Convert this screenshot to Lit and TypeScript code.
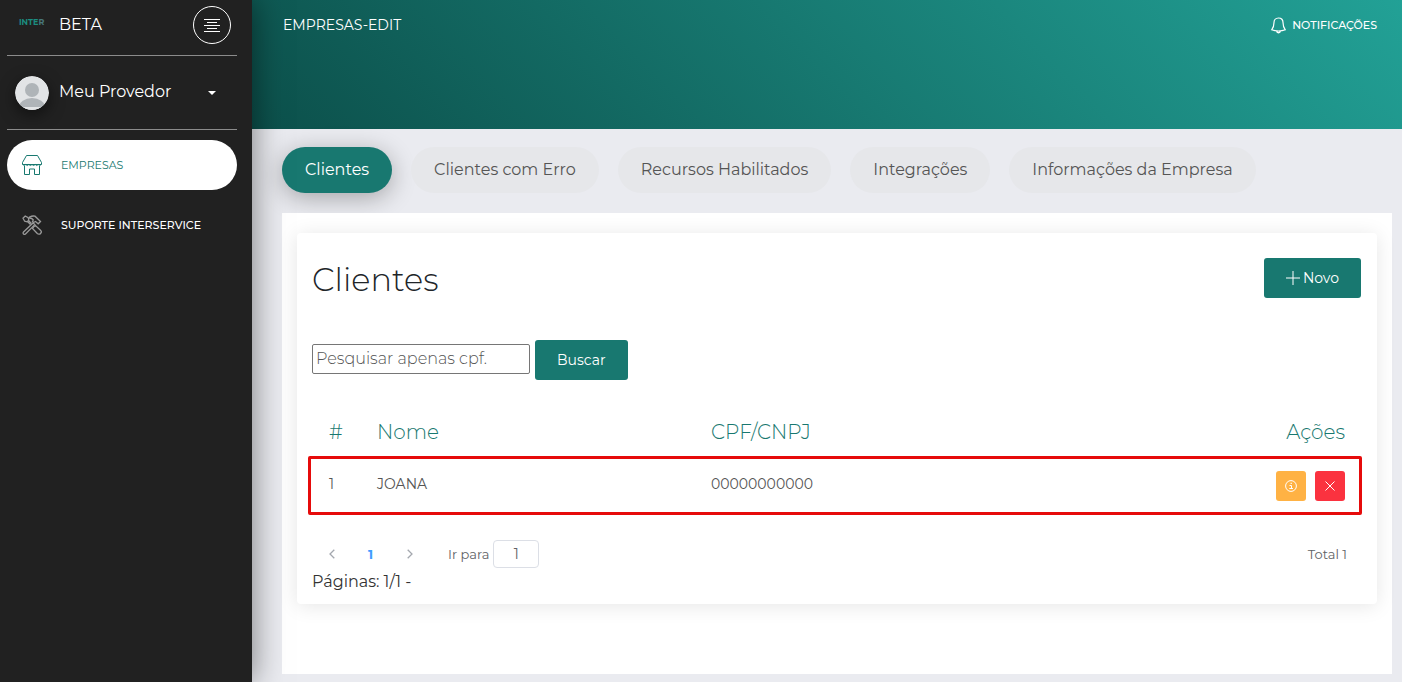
import { LitElement, html, css, svg } from "lit";
import { customElement, property, state } from "lit/decorators.js";
import { classMap } from "lit/directives/class-map.js";

interface Cliente {
  id: number;
  nome: string;
  documento: string;
}

const baseStyles = css`
  *,
  *::before,
  *::after {
    box-sizing: border-box;
  }
  button,
  input {
    font-family: inherit;
    margin: 0;
  }
  button {
    cursor: pointer;
    border: 0;
    padding: 0;
    background: none;
    color: inherit;
  }
  a {
    color: inherit;
    text-decoration: none;
  }
  svg {
    display: block;
    fill: none;
    stroke: currentColor;
    flex: none;
  }
`;

const shopIcon = svg`
  <path d="M4.500.5h11l4 7v2h-19v-2z"/>
  <path d="M.8 9.500q1.500 2 3 0q1.500 2 3 0q1.600 2 3.200 0q1.600 2 3.200 0q1.500 2 3 0q1.500 2 3 0"/>
  <path d="M2.500 11v8.500h5v-5.500h5v5.500h5v-8.500"/>`;

const toolsIcon = svg`
  <path d="M1 3.200l2.200-2.200l3 1.700l.6 2.400l-1.700 1.700l-2.400-.6z"/>
  <path d="M6.500 5.500l3 3M5.500 6.500l3 3"/>
  <path d="M7.500 2q3-1.500 5.500-.8l5.500 5.300l-2.300 2.300l-2.700-2.300l-2 1l-1-1l.8-1.600q-1.500-2-3.800-1.900z"/>
  <path d="M11 8l-9.500 9a1.300 1.300 0 0 0 2 2l9.300-9.400z"/>
  <path d="M10.500 13.500l1.200-1.700l1.800-1.300l5 4.700a2.200 2.200 0 0 1-3.200 3.300z"/>`;

@customElement("app-sidebar")
export class AppSidebar extends LitElement {
  static styles = [
    baseStyles,
    css`
      :host {
        display: block;
        width: 252px;
        flex: none;
        background: #212121;
        color: #fff;
        padding: 0 15px 0 7px;
        box-shadow: 0 0 30px 0 rgba(0, 0, 0, 0.5);
        z-index: 1;
      }
      .brand,
      .user {
        display: flex;
        align-items: center;
        border-bottom: 1px solid #8c8c8c;
      }
      .brand {
        height: 56px;
        padding: 0 6px 6px 12px;
      }
      .logo {
        width: 27px;
        font-size: 8px;
        line-height: 8px;
        font-weight: 700;
        color: #1b8d80;
        padding-bottom: 6px;
      }
      .logo-end {
        color: #48767a;
      }
      .name {
        flex: 1;
        padding-left: 13px;
        font-size: 16px;
        line-height: 24px;
      }
      .toggle {
        width: 38px;
        height: 38px;
        border: 1px solid #fff;
        border-radius: 50%;
        display: grid;
        place-items: center;
      }
      .user {
        width: 100%;
        height: 74px;
        padding: 0 21px 0 8px;
        font-size: 16px;
        line-height: 24px;
        text-align: left;
      }
      .avatar {
        border-radius: 50%;
        box-shadow: 0 5px 15px rgba(0, 0, 0, 0.5);
      }
      .user-name {
        flex: 1;
        padding: 0 0 1px 10px;
      }
      .caret {
        border: 4px solid transparent;
        border-top-color: #fff;
        border-bottom: 0;
      }
      .menu {
        display: flex;
        flex-direction: column;
        gap: 10px;
        padding-top: 10px;
      }
      .item {
        display: flex;
        align-items: center;
        gap: 19px;
        height: 50px;
        padding-left: 15px;
        border-radius: 25px;
        font-size: 11px;
        font-weight: 500;
      }
      .item svg {
        color: #9a9a9a;
      }
      .active,
      .active svg {
        color: #187970;
      }
      .active {
        background: #fff;
        font-weight: 400;
      }
    `,
  ];

  render() {
    return html`
      <div class="brand">
        <span class="logo">INTE<span class="logo-end">R</span></span>
        <span class="name">BETA</span>
        <button class="toggle" aria-label="Alternar menu">
          <svg width="16" height="14" viewBox="0 0 16 14">
            <path d="M0 1.500h16M3 4.500h10M0 7.500h16M3 10.500h10M0 13.500h16" />
          </svg>
        </button>
      </div>
      <button class="user">
        <svg class="avatar" width="34" height="34" viewBox="0 0 34 34" stroke="none">
          <defs><clipPath id="round"><circle cx="17" cy="17" r="17" /></clipPath></defs>
          <g clip-path="url(#round)" stroke="none">
            <rect width="34" height="34" fill="#e2e4e6" />
            <circle cx="17" cy="14" r="7" fill="#afb4b8" />
            <ellipse cx="17" cy="31" rx="13" ry="9" fill="#afb4b8" />
            <rect y="31" width="34" height="3" fill="#e2e4e6" />
          </g>
        </svg>
        <span class="user-name">Meu Provedor</span>
        <span class="caret"></span>
      </button>
      <nav class="menu">
        <a class="item active" href="#empresas">
          <svg width="20" height="20" viewBox="0 0 20 20">${shopIcon}</svg>
          EMPRESAS
        </a>
        <a class="item" href="#suporte">
          <svg width="20" height="20" viewBox="0 0 20 20" stroke-width="1.300">${toolsIcon}</svg>
          SUPORTE INTERSERVICE
        </a>
      </nav>
    `;
  }
}

@customElement("app-tabs")
export class AppTabs extends LitElement {
  @property({ type: Array }) tabs: string[] = [];
  @state() private selected = 0;

  static styles = [
    baseStyles,
    css`
      :host {
        display: flex;
        flex-wrap: wrap;
        gap: 19px;
      }
      .tab {
        height: 46px;
        padding: 0 23px 2px;
        border-radius: 23px;
        background: #e6e7ea;
        color: #555;
        font-size: 16px;
        font-weight: 400;
      }
      .selected {
        background: #187870;
        color: #fff;
        box-shadow: 0 5px 25px rgba(0, 0, 0, 0.3);
      }
    `,
  ];

  render() {
    return this.tabs.map(
      (label, i) => html`
        <button
          class=${classMap({ tab: true, selected: i === this.selected })}
          @click=${() => (this.selected = i)}
        >${label}</button>
      `,
    );
  }
}

@customElement("app-clientes")
export class AppClientes extends LitElement {
  @property({ type: Array }) clientes: Cliente[] = [];

  static styles = [
    baseStyles,
    css`
      :host {
        display: block;
        background: #fff;
        border-radius: 4px;
        padding: 25px 15px 10px;
        box-shadow: 0 2px 20px rgba(0, 0, 0, 0.1);
      }
      .top {
        display: flex;
        justify-content: space-between;
        align-items: flex-start;
        padding-right: 1px;
      }
      .title {
        margin: 0;
        padding-top: 2px;
        font-size: 32px;
        line-height: 40px;
        font-weight: 300;
        color: #212529;
      }
      .primary {
        display: flex;
        align-items: center;
        justify-content: center;
        gap: 3px;
        height: 40px;
        padding: 0 22px;
        border-radius: 3px;
        background: #187870;
        color: #fff;
        font-size: 14px;
      }
      .search {
        display: flex;
        align-items: center;
        gap: 5px;
        margin: 40px 0 32px;
      }
      .query {
        width: 218px;
        height: 30px;
        margin-bottom: 2px;
        padding: 0 3px 2px;
        border: 1px solid #767676;
        border-radius: 2px;
        font-size: 16px;
        font-weight: 300;
      }
      .query::placeholder {
        color: #555;
      }
      .table {
        width: 100%;
        border-collapse: collapse;
        text-align: left;
      }
      th {
        height: 44px;
        padding: 0 17px 5px;
        font-size: 20px;
        font-weight: 300;
        color: #187870;
      }
      td {
        height: 59px;
        padding: 0 17px 3px;
        font-size: 14px;
        font-weight: 400;
        color: #555;
      }
      .num {
        width: 48px;
      }
      .nome {
        width: 334px;
      }
      .right {
        text-align: right;
      }
      .row {
        position: relative;
      }
      .row::after {
        content: "";
        position: absolute;
        inset: 0 0 0 -4px;
        border: 3px solid #e60b0b;
        border-radius: 2px;
        pointer-events: none;
      }
      .actions {
        display: flex;
        justify-content: flex-end;
        gap: 9px;
        padding-top: 4px;
      }
      .action {
        display: grid;
        place-items: center;
        width: 30px;
        height: 30px;
        border-radius: 3px;
        color: #fff;
      }
      .info {
        background: #ffb244;
      }
      .remove {
        background: #fb323f;
      }
      .pager {
        display: flex;
        align-items: center;
        height: 28px;
        margin-top: 25px;
        padding-right: 15px;
        font-size: 13px;
        color: #606266;
      }
      .step {
        width: 39px;
        height: 28px;
        display: grid;
        place-items: center;
        color: #a4a8af;
      }
      .current {
        font-size: 13px;
        font-weight: 700;
        color: #409eff;
      }
      .goto {
        display: flex;
        align-items: center;
        gap: 4px;
        margin-left: 19px;
      }
      .page {
        width: 46px;
        height: 28px;
        border: 1px solid #dcdfe6;
        border-radius: 4px;
        text-align: center;
        font-size: 14px;
        font-weight: 400;
        color: #606266;
      }
      .total {
        margin-left: auto;
      }
      .pages {
        margin: 2px 0 0;
        font-size: 16px;
        line-height: 24px;
        font-weight: 400;
        color: #333;
      }
    `,
  ];

  render() {
    return html`
      <div class="top">
        <h2 class="title">Clientes</h2>
        <button class="primary">
          <svg width="14" height="14" viewBox="0 0 14 14"><path d="M7 0v14M0 7h14" /></svg>
          Novo
        </button>
      </div>
      <form class="search" @submit=${(e: Event) => e.preventDefault()}>
        <input class="query" type="text" aria-label="Pesquisar apenas cpf" placeholder="Pesquisar apenas cpf." />
        <button class="primary">Buscar</button>
      </form>
      <table class="table">
        <thead>
          <tr>
            <th class="num">#</th>
            <th class="nome">Nome</th>
            <th>CPF/CNPJ</th>
            <th class="right">Ações</th>
          </tr>
        </thead>
        <tbody>
          ${this.clientes.map(
            (c) => html`
              <tr class="row">
                <td>${c.id}</td>
                <td>${c.nome}</td>
                <td>${c.documento}</td>
                <td>
                  <div class="actions">
                    <button class="action info" aria-label="Detalhes">
                      <svg width="12" height="12" viewBox="0 0 12 12">
                        <circle cx="6" cy="6" r="5.400" />
                        <path d="M4.500 5.500h2v3.500M4.300 8.500h3.700M5.500 3.300h1.500" />
                      </svg>
                    </button>
                    <button class="action remove" aria-label="Remover">
                      <svg width="10" height="10" viewBox="0 0 10 10"><path d="M.5.5l9 9M9.500.5l-9 9" /></svg>
                    </button>
                  </div>
                </td>
              </tr>
            `,
          )}
        </tbody>
      </table>
      <div class="pager">
        <button class="step" aria-label="Página anterior">
          <svg width="6" height="10" viewBox="0 0 6 10" stroke-width="1.300"><path d="M5.300.7L1 5l4.300 4.300" /></svg>
        </button>
        <button class="step current">1</button>
        <button class="step" aria-label="Próxima página">
          <svg width="6" height="10" viewBox="0 0 6 10" stroke-width="1.300"><path d="M.7.7L5 5L.7 9.300" /></svg>
        </button>
        <label class="goto">Ir para <input class="page" type="text" value="1" /></label>
        <span class="total">Total 1</span>
      </div>
      <p class="pages">Páginas: 1/1 -</p>
    `;
  }
}

@customElement("app-root")
export class AppRoot extends LitElement {
  private tabs = [
    "Clientes",
    "Clientes com Erro",
    "Recursos Habilitados",
    "Integrações",
    "Informações da Empresa",
  ];
  private clientes: Cliente[] = [{ id: 1, nome: "JOANA", documento: "00000000000" }];

  static styles = [
    baseStyles,
    css`
      :host {
        display: flex;
        min-height: 100vh;
        background: #eaebf0;
        font-family: Montserrat, Inter, sans-serif;
      }
      .page {
        flex: 1;
        min-width: 0;
        display: flex;
        flex-direction: column;
      }
      .header {
        display: flex;
        justify-content: space-between;
        align-items: flex-start;
        height: 129px;
        padding: 13px 25px 0 31px;
        background: linear-gradient(45deg, #0c504b, #22a196);
        color: #fff;
        line-height: 24px;
      }
      .crumb {
        font-size: 14px;
      }
      .bell {
        display: flex;
        align-items: center;
        gap: 6px;
        font-size: 11px;
        font-weight: 500;
        line-height: 24px;
      }
      .body {
        flex: 1;
        display: flex;
        flex-direction: column;
        gap: 20px;
        padding: 18px 10px 8px 30px;
      }
      .panel {
        flex: 1;
        background: #fff;
        padding: 20px 15px;
      }
    `,
  ];

  render() {
    return html`
      <app-sidebar></app-sidebar>
      <div class="page">
        <header class="header">
          <a class="crumb" href="#empresas-edit">EMPRESAS-EDIT</a>
          <button class="bell">
            <svg width="15" height="17" viewBox="0 0 15 17">
              <path d="M7.500 1c-3 0-4.500 2.200-4.500 4.500c0 4-.7 5.500-2.300 7.300q3 1.200 6.800 1.200t6.800-1.200c-1.600-1.800-2.300-3.300-2.300-7.300c0-2.300-1.500-4.500-4.500-4.500z" stroke-width="1.200" />
              <path d="M5.500 14.300q2 2.800 4 0" stroke-width="1.500" />
            </svg>
            NOTIFICAÇÕES
          </button>
        </header>
        <main class="body">
          <app-tabs .tabs=${this.tabs}></app-tabs>
          <section class="panel">
            <app-clientes .clientes=${this.clientes}></app-clientes>
          </section>
        </main>
      </div>
    `;
  }
}
